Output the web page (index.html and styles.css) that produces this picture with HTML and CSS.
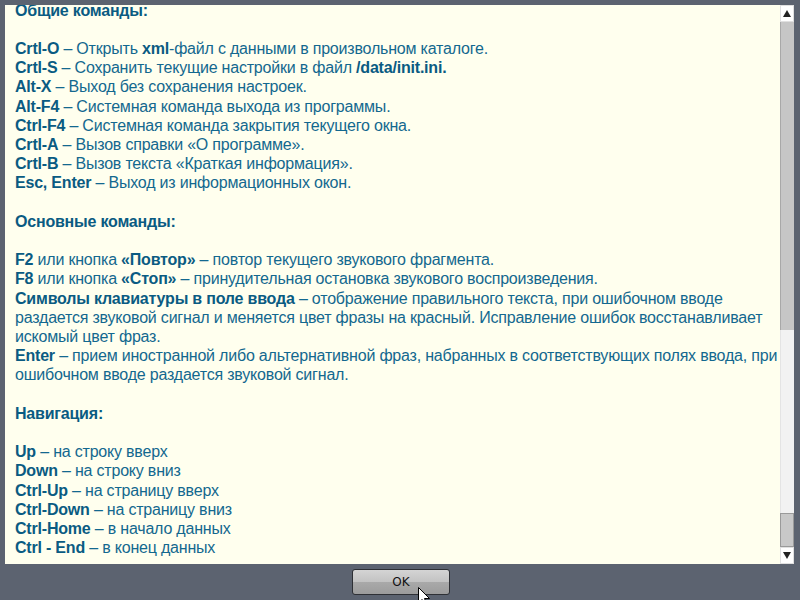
FILE: index.html
```html
<!DOCTYPE html>
<html lang="ru">
<head>
  <meta charset="UTF-8">
  <title>Справка</title>
  <link rel="stylesheet" href="styles.css">
</head>
<body>

  <div class="viewer">
    <div class="content">
      <div class="text">
        <h3>Общие команды:</h3>
        <p>
          <b>Crtl-O</b> – Открыть <b>xml</b>-файл с данными в произвольном каталоге.<br>
          <b>Crtl-S</b> – Сохранить текущие настройки в файл <b>/data/init.ini.</b><br>
          <b>Alt-X</b> – Выход без сохранения настроек.<br>
          <b>Alt-F4</b> – Системная команда выхода из программы.<br>
          <b>Ctrl-F4</b> – Системная команда закрытия текущего окна.<br>
          <b>Crtl-A</b> – Вызов справки «О программе».<br>
          <b>Crtl-B</b> – Вызов текста «Краткая информация».<br>
          <b>Esc, Enter</b> – Выход из информационных окон.
        </p>
        <h3>Основные команды:</h3>
        <p>
          <b>F2</b> или кнопка <b>«Повтор»</b> – повтор текущего звукового фрагмента.<br>
          <b>F8</b> или кнопка <b>«Стоп»</b> – принудительная остановка звукового воспроизведения.<br>
          <b>Символы клавиатуры в поле ввода</b> – отображение правильного текста, при ошибочном вводе раздается звуковой сигнал и меняется цвет фразы на красный. Исправление ошибок восстанавливает искомый цвет фраз.<br>
          <b>Enter</b> – прием иностранной либо альтернативной фраз, набранных в соответствующих полях ввода, при ошибочном вводе раздается звуковой сигнал.
        </p>
        <h3>Навигация:</h3>
        <p>
          <b>Up</b> – на строку вверх<br>
          <b>Down</b> – на строку вниз<br>
          <b>Ctrl-Up</b> – на страницу вверх<br>
          <b>Ctrl-Down</b> – на страницу вниз<br>
          <b>Ctrl-Home</b> – в начало данных<br>
          <b>Ctrl - End</b> – в конец данных
        </p>
      </div>
    </div>
    <div class="scrollbar">
      <div class="sb-btn"><span class="arrow-up"></span></div>
      <div class="sb-used"></div>
      <div class="sb-track"></div>
      <div class="sb-thumb"></div>
      <div class="sb-btn"><span class="arrow-down"></span></div>
    </div>
  </div>

  <div class="footer">
    <button class="ok-btn">OK</button>
  </div>

  <svg class="cursor" width="13" height="20" viewBox="0 0 13 20">
    <path d="M0.5 0.5 L0.5 16 L4 12.5 L6.5 18.5 L9 17.5 L6.5 11.5 L11.5 11.5 Z" fill="#fff" stroke="#000" stroke-width="1"/>
  </svg>

</body>
</html>
```

FILE: styles.css
```css
html, body {
  margin: 0;
  height: 600px;
  overflow: hidden;
}
body {
  background: #5c6370;
  font-family: "Liberation Sans", Arial, sans-serif;
  display: flex;
  flex-direction: column;
  position: relative;
}
.viewer {
  display: flex;
  height: 559px;
  margin: 5px 6px 0 5px;
}
.content {
  flex: 1;
  background: #ffffee;
  overflow: hidden;
  padding: 0 2px 0 10px;
}
.text {
  margin-top: -4.5px;
  font-size: 16px;
  line-height: 19.2px;
  letter-spacing: -0.2px;
  color: #13688f;
}
.text h3 {
  font-size: 16px;
  margin: 0 0 19.2px;
  color: #0a5b82;
}
.text p {
  margin: 0 0 19.2px;
}
.text b {
  color: #0a5b82;
}
.scrollbar {
  width: 14px;
  display: flex;
  flex-direction: column;
  background: #f0f0f0;
}
.sb-btn {
  height: 17px;
  background: #fff;
  border: 1px solid #e0e0e0;
  box-sizing: border-box;
  display: flex;
  align-items: center;
  justify-content: center;
}
.arrow-up {
  border-left: 4px solid transparent;
  border-right: 4px solid transparent;
  border-bottom: 7px solid #222;
}
.arrow-down {
  border-left: 4px solid transparent;
  border-right: 4px solid transparent;
  border-top: 7px solid #222;
}
.sb-used {
  height: 308px;
  background: #c6c6c6;
  border-left: 1px solid #a8a8a8;
}
.sb-track {
  flex: 1;
  background: #f2f2f2;
  border-left: 1px solid #e4e4e4;
}
.sb-thumb {
  height: 34px;
  background: #c8c8c8;
  border: 1px solid #9a9a9a;
  box-sizing: border-box;
}
.footer {
  flex: 1;
  display: flex;
  justify-content: center;
  align-items: center;
}
.ok-btn {
  width: 98px;
  height: 26px;
  margin-left: 2px;
  border: 1px solid #2e3035;
  border-radius: 3px;
  background: linear-gradient(#d4d4d4, #c2c2c2 50%, #a9a9a9 51%, #9c9c9c);
  font-family: "DejaVu Sans", Tahoma, sans-serif;
  font-size: 12px;
  color: #111;
}
.cursor {
  position: absolute;
  left: 418px;
  top: 587px;
}
```
